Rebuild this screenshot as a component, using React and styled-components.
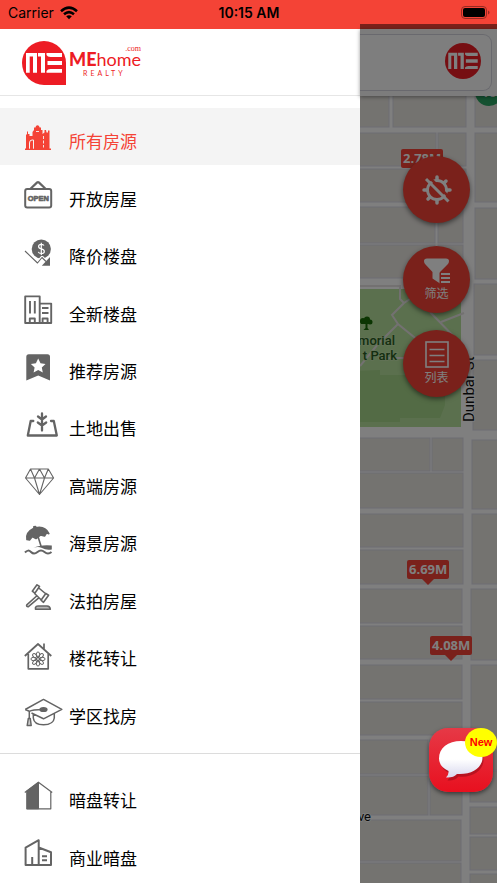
import React, { useState } from "react";
import styled, { createGlobalStyle, css } from "styled-components";

const RED = "#f44336";
const BRAND = "#ed1c24";
const GREY = "#646464";

const GlobalStyle = createGlobalStyle`
  *, *::before, *::after { box-sizing: border-box; }
  body { margin: 0; background: #fff; }
  button { font: inherit; border: 0; padding: 0; cursor: pointer; }
`;

const Screen = styled.div`
  display: flex;
  flex-direction: column;
  height: 100vh;
  overflow: hidden;
  font-family: Inter, "Noto Sans CJK SC", sans-serif;
  color: #000;
`;

const StatusBar = styled.header`
  display: grid;
  grid-template-columns: 1fr auto 1fr;
  align-items: center;
  flex: none;
  height: 29px;
  padding: 0 7px 4px 8px;
  background: ${RED};
  font-size: 14px;
  line-height: 20px;
`;

const Carrier = styled.div`
  display: flex;
  align-items: center;
  gap: 6px;
`;

const Clock = styled.time`
  font-weight: 600;
`;

const Battery = styled.div`
  display: flex;
  justify-content: flex-end;
`;

const Body = styled.div`
  display: flex;
  flex: 1;
  min-height: 0;
`;

const Drawer = styled.aside`
  flex: 0 0 360px;
  background: #fff;
  overflow: hidden;
`;

const DrawerHeader = styled.div`
  display: flex;
  align-items: center;
  gap: 3px;
  height: 67px;
  padding: 2px 22px 0;
  border-bottom: 1px solid #e6e6e6;
  color: ${BRAND};
`;

const Brand = styled.div`
  display: flex;
  flex-direction: column;
  align-items: flex-start;
  position: relative;
  font-family: Lato, sans-serif;
`;

const BrandName = styled.div`
  font-size: 18px;
  line-height: 20px;
  font-weight: 400;
  strong { font-weight: 900; }
`;

const BrandSuffix = styled.span`
  position: absolute;
  top: -4px;
  right: 0;
  font-family: "Liberation Serif", serif;
  font-size: 8px;
  line-height: 8px;
`;

const BrandTag = styled.div`
  padding-left: 14px;
  font-size: 7px;
  line-height: 8px;
  letter-spacing: 3px;
`;

const Menu = styled.ul`
  display: grid;
  grid-auto-rows: 1fr;
  min-height: ${(p) => p.$height}px;
  margin: 0;
  padding: 0;
  list-style: none;
`;

const MenuNav = styled.nav`
  padding-top: 12px;
`;

const Divider = styled.hr`
  margin: 13px 0;
  border: 0;
  border-top: 1px solid #dcdcdc;
`;

const MenuLink = styled.a`
  display: flex;
  align-items: center;
  gap: 5px;
  height: 100%;
  padding-left: 24px;
  color: #000;
  text-decoration: none;
  ${(p) =>
    p.$active &&
    css`
      background: #f4f4f4;
      color: ${RED};
    `}
`;

const MenuIcon = styled.svg`
  flex: none;
  width: 40px;
  height: 30px;
  overflow: visible;
  fill: none;
  stroke: ${GREY};
  stroke-width: 1.7;
  stroke-linejoin: round;
`;

const MenuLabel = styled.span`
  padding-top: 9px;
  font-family: "Noto Sans CJK SC", sans-serif;
  font-size: 17px;
  line-height: 24px;
`;

const MapPane = styled.main`
  position: relative;
  display: flex;
  flex-direction: column;
  flex: 1;
  min-width: 0;
`;

const SearchBar = styled.div`
  position: relative;
  z-index: 1;
  flex: none;
  height: 67px;
  padding: 5px 5px 5px 0;
  background: #f8f8f8;
  box-shadow: 0 1px 4px rgba(0, 0, 0, 0.4);
`;

const SearchCard = styled.div`
  display: flex;
  align-items: center;
  justify-content: flex-end;
  height: 57px;
  padding: 0 10px 4px 0;
  border: 1px solid #d2d2dc;
  border-left: 0;
  border-radius: 0 9px 9px 0;
  background: #fdfdfd;
`;

const MapCanvas = styled.div`
  position: relative;
  flex: 1;
  min-height: 0;
  overflow: hidden;
  background: #fefefe;
`;

const MapDrawing = styled.svg`
  display: block;
  width: 100%;
  height: 100%;
  font-family: Roboto, sans-serif;
`;

const Pin = styled.div`
  position: absolute;
  left: ${(p) => p.$x}px;
  top: ${(p) => p.$y}px;
  padding: 0 2px;
  border-radius: 2px;
  background: ${RED};
  color: #fff;
  font-family: "Open Sans", sans-serif;
  font-size: 13px;
  font-weight: 700;
  line-height: 19px;
  &::after {
    content: "";
    position: absolute;
    left: 50%;
    top: 100%;
    margin-left: -6px;
    border: 6px solid transparent;
    border-top-color: ${RED};
    border-bottom: 0;
  }
`;

const Cluster = styled.div`
  position: absolute;
  left: 115px;
  top: -18px;
  width: 28px;
  height: 28px;
  border-radius: 50%;
  background: #2aa362;
  color: #fff;
  font: 700 13px/28px "Open Sans", sans-serif;
  text-align: center;
`;

const Actions = styled.div`
  position: absolute;
  z-index: 1;
  top: 127px;
  right: 27px;
  display: grid;
  gap: 17px;
`;

const ActionButton = styled.button`
  display: flex;
  flex-direction: column;
  align-items: center;
  justify-content: center;
  width: 67px;
  height: 67px;
  margin-bottom: ${(p) => (p.$spaced ? 6 : 0)}px;
  border-radius: 50%;
  background: ${RED};
  color: #fff;
  box-shadow: 0 2px 5px rgba(0, 0, 0, 0.5);
  font-family: "Noto Sans CJK SC", sans-serif;
  font-size: 12px;
  line-height: 18px;
`;

const Scrim = styled.div`
  position: absolute;
  z-index: 2;
  inset: -5px 0 0;
  background: rgba(0, 0, 0, 0.5);
`;

const ChatButton = styled.button`
  position: absolute;
  z-index: 3;
  right: 4px;
  bottom: 91px;
  width: 64px;
  height: 64px;
  border-radius: 19px;
  background: linear-gradient(#e63946, #e8101f);
  box-shadow: 0 2px 4px rgba(0, 0, 0, 0.5);
  svg { display: block; }
`;

const NewBadge = styled.span`
  position: absolute;
  top: 0;
  right: -4px;
  width: 32px;
  height: 29px;
  border-radius: 50%;
  background: #ff0;
  color: #f00;
  font: 700 11px/28px "Liberation Sans", sans-serif;
  text-align: center;
`;

function MeGlyph() {
  return (
    <g fill="#fff">
      <path d="M4 12H15V31.800H11V15.500H7.700V31.800H4Z" />
      <path d="M16 12H23V31.800H19V15.500H16Z" />
      <path d="M24.500 12H40V16H28.500Q25.500 16 24.500 14ZM25.500 20H40V24H25.500ZM24.500 30Q25.500 28 28.500 28H40V31.800H24.500Z" />
    </g>
  );
}

function DrawerLogo() {
  return (
    <svg width="44" height="44" viewBox="0 0 44 44" aria-hidden="true">
      <path d="M22 0A22 22 0 1 0 22 44H44V22A22 22 0 0 0 22 0Z" fill={BRAND} />
      <MeGlyph />
    </svg>
  );
}

function RoundLogo() {
  return (
    <svg width="36" height="36" viewBox="0 0 44 44" role="img" aria-label="MEhome">
      <circle cx="22" cy="22" r="22" fill={BRAND} />
      <MeGlyph />
    </svg>
  );
}

const icons = {
  all: (
    <g fill={RED} stroke="none">
      <path d="M1 26.6H2V12.5H3V9.5H4V12H5.5V14H8.5V10L10 8V5.5H11.5L12 4Q13.5 2.5 15 4L15.6 5.5H17V8H18.5V12L20.5 10.5V8H22L22.5 10.5H24V8.5H25.5V26.6H27V28H1Z" />
      <path d="M5.5 26.7V21Q5.500 18 8 18H9.500V26.700" fill="none" stroke="#f4f4f4" strokeWidth="1" />
      <path d="M12 9.500H16M19.500 14V25.500" fill="none" stroke="#f4f4f4" strokeWidth="0.900" strokeDasharray="3 1.500" />
    </g>
  ),
  open: (
    <g>
      <rect x="1.2" y="10" width="26" height="18.6" rx="2" strokeWidth="2" />
      <path d="M6.5 9.8L13.2 3.4Q14 2.8 14.8 3.4L21.5 9.8" strokeWidth="2.2" />
      <text x="14.3" y="22.3" textAnchor="middle" fill={GREY} strokeWidth="0.6" fontFamily="Liberation Sans, sans-serif" fontWeight="700" fontSize="7.5">OPEN</text>
    </g>
  ),
  price: (
    <g>
      <circle cx="17.3" cy="12" r="9.6" fill={GREY} stroke="none" />
      <path d="M1 14L13.5 26L18 20.5L22 24.5" stroke="#fff" strokeWidth="3.4" />
      <path d="M1 14L13.5 26L18 20.5L22 24.5" strokeWidth="1.1" />
      <path d="M26 20V28.7H17.8Z" fill={GREY} stroke="none" />
      <path d="M20 8.6Q19.4 7.4 17.3 7.4Q14.6 7.4 14.6 9.4Q14.6 11.2 17.3 11.8Q20.3 12.4 20.3 14.4Q20.3 16.5 17.3 16.5Q14.9 16.5 14.3 14.9M17.3 5.8V18" stroke="#fff" strokeWidth="1.2" />
    </g>
  ),
  fresh: (
    <g strokeWidth="1.9">
      <path d="M1.2 29V2.4H15.7V29ZM15.7 9.6H27.2V29H15.7" />
      <path d="M6 7V19.5M10.8 7V19.5M18 14H24.5M18 19H24.5M5.8 29V24.5H10.8V29M18.6 29V24.5H23.6V29" />
    </g>
  ),
  star: (
    <g stroke="none">
      <path d="M2.3 4.7Q2.3 2.2 4.8 2.2H23.5Q26 2.2 26 4.7V28.6L14.2 23.4L2.3 28.6Z" fill={GREY} />
      <path d="M14.2 6.5L16.5 11.2L21.5 11.9L17.8 15.4L18.8 20.5L14.2 18L9.6 20.5L10.6 15.4L6.9 11.9L11.9 11.2Z" fill="#fff" />
    </g>
  ),
  land: (
    <g strokeWidth="2.3">
      <path d="M9.3 12H6.7L3.8 26.5H32.8L29.8 12H27M18 4.5V21.500M13.800 13.500L18 16.500L22.200 13.500M14 7.500L18 10.500L22 7.500" strokeLinecap="round" />
    </g>
  ),
  diamond: (
    <path d="M6.5 3H24.3L29.6 12L15.5 28.5L1.5 12ZM1.5 12H29.6M6.5 3L10.5 12L15.5 3L20.5 12L24.3 3M10.5 12L15.5 28.5L20.5 12" strokeWidth="1.1" />
  ),
  sea: (
    <g>
      <path d="M3 15.5Q1.5 8.5 10 4.3L9.9 2.8L11.5 2.6L12 3.8Q21 2 24.8 9.6L22.5 8.8L20.5 12L16.6 10.9L12 14.5L8.3 12.4L5.5 16Z" fill={GREY} />
      <path d="M13.5 11L17.3 23" strokeWidth="1.6" />
      <path d="M9.5 24Q16 20.5 27.8 21.5V25.5Q22 26.5 18 24Q14 22 9.5 24Z" fill={GREY} stroke="none" />
      <path d="M1 28.5Q4 25 7 28T13.5 28T20.5 28T27.5 28" strokeWidth="2" />
    </g>
  ),
  auction: (
    <g strokeWidth="1.6">
      <path d="M8.300 10.200L13 3.800L15.500 5.500L10.800 12.200ZM17 19.200L21.800 12.500L24.600 14.200L19.500 21.300ZM14.800 7L22 13M10.300 12.200L17.300 19M13.200 14.500L2.800 23.800Q2 25.800 4.400 25.600L14.800 16.800" />
      <path d="M11.500 28.300V26.500Q12 25 14 25H23Q26 25 26.300 28.300Z" fill="#b8b8b8" />
    </g>
  ),
  flower: (
    <g strokeWidth="1.7">
      <path d="M4.3 15V29.8H24.2V15M.8 17L14 5L27.3 17M20 10V4.5" />
      <g strokeWidth="1">
        {[0, 45, 90, 135, 180, 225, 270, 315].map((a) => (
          <ellipse key={a} cx="14" cy="15.8" rx="1.7" ry="2.9" transform={`rotate(${a} 14 20)`} />
        ))}
        <circle cx="14" cy="20" r="1.6" />
      </g>
    </g>
  ),
  school: (
    <g strokeWidth="1.5">
      <path d="M1.2 13.5L19.5 3.4L37.8 13.3L19.5 22.8L7.500 17M5.300 15.300Q8 13.700 19.500 13.500M1.200 13.500L5.300 15.300V23M9.300 18V22Q10 28.800 19.500 28.800Q29.500 28.600 30.300 22V17.700" />
      <ellipse cx="19.5" cy="13.5" rx="3.4" ry="1.8" fill={GREY} />
      <path d="M4.3 22.5L3.2 29.5H7.2L6.3 22.5Z" fill="#ccc" />
    </g>
  ),
  half: (
    <g strokeWidth="1.2">
      <path d="M2.8 10.3L14.4 1.8V27.6H2.8Z" fill={GREY} />
      <path d="M.8 11.5L14.4 1.2L28.2 11.5M26.8 10.5V27.8H2.6" />
    </g>
  ),
  commercial: (
    <g strokeWidth="2">
      <path d="M1.6 27V9.6L14.7 2.2V27ZM14.7 9.5L27 14.3V27H14.7M8.2 27V19M18 18.2H23M18 22.2H23" />
    </g>
  ),
};

const primaryItems = [
  ["all", "所有房源"],
  ["open", "开放房屋"],
  ["price", "降价楼盘"],
  ["fresh", "全新楼盘"],
  ["star", "推荐房源"],
  ["land", "土地出售"],
  ["diamond", "高端房源"],
  ["sea", "海景房源"],
  ["auction", "法拍房屋"],
  ["flower", "楼花转让"],
  ["school", "学区找房"],
];

const offMarketItems = [
  ["half", "暗盘转让"],
  ["commercial", "商业暗盘"],
];

/* City blocks: left, top, right, bottom */
const blocks = [
  [350, 90, 389, 127], [393, 90, 466, 127], [475, 90, 505, 127],
  [350, 133, 436, 166], [438, 133, 466, 166], [475, 133, 505, 202],
  [350, 169, 436, 202], [438, 169, 466, 202],
  [350, 207, 435, 243], [438, 207, 463, 243], [350, 245, 435, 278],
  [438, 245, 463, 278], [475, 208, 505, 279],
  [474, 284, 505, 355], [473, 360, 505, 430],
  [350, 438, 430, 471], [432, 438, 463, 471], [472, 440, 505, 509],
  [350, 473, 463, 508], [350, 514, 463, 547], [350, 550, 463, 584],
  [472, 514, 505, 584], [350, 589, 462, 623], [350, 626, 462, 659],
  [471, 589, 505, 660], [350, 665, 462, 699], [350, 702, 462, 735],
  [471, 665, 505, 770], [350, 740, 428, 774], [350, 776, 428, 815],
  [430, 740, 462, 815], [350, 820, 461, 861], [350, 863, 461, 895],
  [470, 771, 505, 802], [470, 807, 505, 834], [470, 837, 505, 870],
  [470, 874, 505, 895],
];

function MapArtwork() {
  return (
    <MapDrawing viewBox="360 96 137 787" preserveAspectRatio="xMinYMin slice" role="img" aria-label="Map">
      {blocks.map(([l, t, r, b]) => (
        <rect key={`${l}-${t}`} x={l} y={t} width={r - l} height={b - t} fill="#e9e6e1" stroke="#dadae6" />
      ))}
      <rect x="350" y="289" width="111" height="138" fill="#b6e09c" />
      <path d="M350 371L380 370V375H445V405L440 418H400V422H350Z" fill="#a6d68a" />
      <path d="M350 286H400V299L404 303L392 315L398 324L430 350M404 303L410 299M398 324L378 344L360 366M430 312L462 345M441 322L464 313M378 358H404" fill="none" stroke="#e6e2e2" strokeWidth="2" />
      <g fill="#176b05">
        <circle cx="363" cy="321" r="3" /><circle cx="367" cy="319.500" r="3" /><circle cx="370" cy="322" r="2.500" />
        <path d="M360 321H372V324H367.5V328L369 330H363.500L365.500 328V324H361Z" />
      </g>
      <g fill="#295c22" stroke="#c5e6ad" strokeWidth="1.500" paintOrder="stroke" fontSize="13" fontWeight="500" textAnchor="end">
        <text x="395" y="345">morial</text>
        <text x="397" y="360">t Park</text>
      </g>
      <g fill="#111" stroke="#fff" strokeWidth="1.500" paintOrder="stroke" fontSize="15">
        <text transform="translate(474 422) rotate(-90)">Dunbar St</text>
        <text x="371" y="821" fontSize="13" textAnchor="end">ve</text>
      </g>
    </MapDrawing>
  );
}

function MenuSection({ items, height, active, onSelect }) {
  return (
    <Menu $height={height}>
      {items.map(([id, label]) => (
        <li key={id}>
          <MenuLink
            href={`#${id}`}
            $active={active === id}
            aria-current={active === id ? "page" : undefined}
            onClick={() => onSelect(id)}
          >
            <MenuIcon viewBox="0 0 40 30" aria-hidden="true">{icons[id]}</MenuIcon>
            <MenuLabel>{label}</MenuLabel>
          </MenuLink>
        </li>
      ))}
    </Menu>
  );
}

export default function App() {
  const [active, setActive] = useState("all");
  return (
    <Screen>
      <GlobalStyle />
      <StatusBar>
        <Carrier>
          Carrier
          <svg width="18" height="14" viewBox="0 0 18 14" fill="none" stroke="#000" strokeWidth="2.500" aria-hidden="true">
            <path d="M1 5.200Q9-2 17 5.200M4 8.300Q9 4 14 8.300" />
            <path d="M6.200 10.300Q9 8 11.800 10.300L9 13.300Z" fill="#000" stroke="none" />
          </svg>
        </Carrier>
        <Clock>10:15 AM</Clock>
        <Battery>
          <svg width="29" height="13" viewBox="0 0 29 13" role="img" aria-label="Battery full">
            <rect x="0.500" y="0.500" width="25" height="12" rx="3.500" fill="none" stroke="#962a22" />
            <rect x="2" y="2" width="22" height="9" rx="2" />
            <path d="M27 4.500Q28.500 5 28.500 6.500T27 8.500Z" fill="#962a22" />
          </svg>
        </Battery>
      </StatusBar>
      <Body>
        <Drawer>
          <DrawerHeader>
            <DrawerLogo />
            <Brand>
              <BrandName><strong>ME</strong>home</BrandName>
              <BrandSuffix>.com</BrandSuffix>
              <BrandTag>REALTY</BrandTag>
            </Brand>
          </DrawerHeader>
          <MenuNav aria-label="房源">
            <MenuSection items={primaryItems} height={632} active={active} onSelect={setActive} />
            <Divider />
            <MenuSection items={offMarketItems} height={115} active={active} onSelect={setActive} />
          </MenuNav>
        </Drawer>
        <MapPane>
          <SearchBar>
            <SearchCard><RoundLogo /></SearchCard>
          </SearchBar>
          <MapCanvas>
            <MapArtwork />
            <Cluster>10</Cluster>
            <Pin $x={41} $y={53}>2.78M</Pin>
            <Pin $x={47} $y={464}>6.69M</Pin>
            <Pin $x={70} $y={540}>4.08M</Pin>
          </MapCanvas>
          <Actions>
            <ActionButton type="button" aria-label="定位" $spaced>
              <svg width="30" height="30" viewBox="0 0 30 30" fill="none" stroke="#fff" aria-hidden="true">
                <circle cx="15" cy="15" r="9.500" strokeWidth="2.800" />
                <path d="M15 2V5M15 25V28M2 15H5M25 15H28M22 8L24 6M8 22L6 24" strokeWidth="3.500" strokeLinecap="round" />
                <path d="M6.500 1.500L29 24" stroke={RED} strokeWidth="2.500" />
                <path d="M4 4L26.500 26.500" strokeWidth="3" />
              </svg>
            </ActionButton>
            <ActionButton type="button">
              <svg width="28" height="26" viewBox="0 0 28 26" fill="#fff" aria-hidden="true">
                <path d="M1 3Q1 .5 4 .5H23Q26 .5 26 3Q26 5 24.500 6.500L17 14V25.500L9.500 20.500V14L2.500 6.500Q1 5 1 3Z" />
                <path d="M16.500 14.500H27V25.500H16.500Z" fill={RED} />
                <path d="M18 15H27V17H18ZM18 19H27V21H18ZM18 23H27V25H18Z" />
              </svg>
              筛选
            </ActionButton>
            <ActionButton type="button">
              <svg width="24" height="27" viewBox="0 0 24 27" fill="none" stroke="#fff" aria-hidden="true">
                <rect x="1" y="1" width="22" height="25" strokeWidth="1.600" />
                <path d="M4.500 8.500H19.500M4.500 14.500H19.500M4.500 20.500H19.500" strokeWidth="1.600" />
              </svg>
              列表
            </ActionButton>
          </Actions>
          <Scrim />
          <ChatButton type="button" aria-label="Chat, New">
            <svg width="64" height="64" viewBox="0 0 64 64" aria-hidden="true">
              <defs>
                <linearGradient id="bubble" x1="0" y1="0" x2="0" y2="1">
                  <stop offset="0.5" stopColor="#fff" />
                  <stop offset="1" stopColor="#d8d8ee" />
                </linearGradient>
              </defs>
              <path d="M32 14C19 14 10.500 21 10.500 31Q10.500 39 20 43.500Q20.500 47.500 17.500 50.500Q25 51 28.500 46.500C43 48 53.500 40 53.500 30C53.500 20 44 14 32 14Z" transform="translate(1 2)" fill="#8a0a16" opacity="0.5" />
              <path d="M32 13C19 13 10 20 10 30.500Q10 38.500 19.500 43Q20 47 17 49.500Q24.500 50 28 46C43 47 53.500 39.500 53.500 29.500C53.500 19 44 13 32 13Z" fill="url(#bubble)" />
            </svg>
            <NewBadge>New</NewBadge>
          </ChatButton>
        </MapPane>
      </Body>
    </Screen>
  );
}
